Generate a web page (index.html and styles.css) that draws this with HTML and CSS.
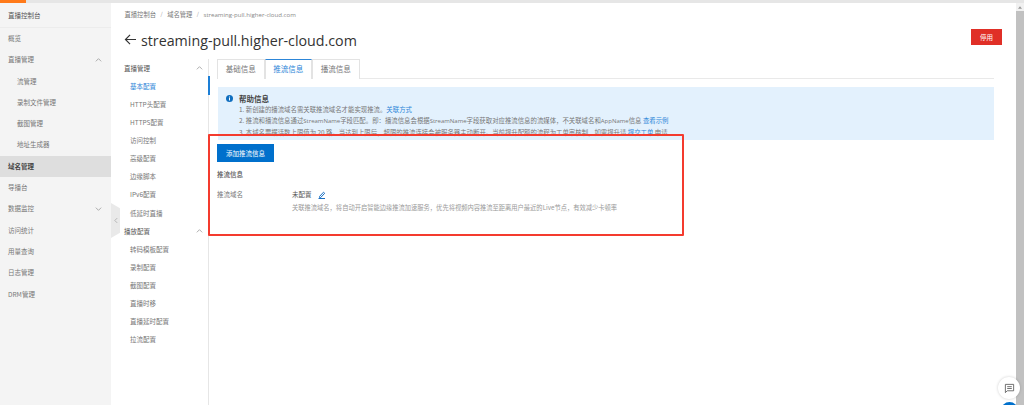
FILE: index.html
```html
<!DOCTYPE html>
<html lang="zh">
<head>
<meta charset="utf-8">
<title>域名管理</title>
<link rel="stylesheet" href="styles.css">
</head>
<body>
<div class="topbar"><div class="topbar-accent"></div></div>
<div class="app">
  <aside class="sidebar">
    <div class="side-head">直播控制台</div>
    <nav>
      <div class="side-item">概览</div>
      <div class="side-item has-arrow">直播管理<svg class="chev" viewBox="0 0 10 6"><path d="M1 5l4-4 4 4"/></svg></div>
      <div class="side-item sub">流管理</div>
      <div class="side-item sub">录制文件管理</div>
      <div class="side-item sub">截图管理</div>
      <div class="side-item sub">地址生成器</div>
      <div class="side-item active">域名管理</div>
      <div class="side-item">导播台</div>
      <div class="side-item has-arrow">数据监控<svg class="chev" viewBox="0 0 10 6"><path d="M1 1l4 4 4-4"/></svg></div>
      <div class="side-item">访问统计</div>
      <div class="side-item">用量查询</div>
      <div class="side-item">日志管理</div>
      <div class="side-item">DRM管理</div>
    </nav>
    <div class="collapse"><svg viewBox="0 0 5 8"><path d="M4 1L1 4l3 3"/></svg></div>
  </aside>
  <div class="content">
    <div class="breadcrumb">
      <span>直播控制台</span><i>/</i><span>域名管理</span><i>/</i><span>streaming-pull.higher-cloud.com</span>
    </div>
    <div class="title-row">
      <svg class="back" viewBox="0 0 14 12"><path d="M13 6H1.500M6.500 1L1.500 6l5 5"/></svg>
      <h1>streaming-pull.higher-cloud.com</h1>
      <button class="danger">停用</button>
    </div>
    <div class="columns">
      <div class="subnav">
        <div class="sub-group">直播管理<svg class="chev" viewBox="0 0 10 6"><path d="M1 5l4-4 4 4"/></svg></div>
        <div class="sub-item current">基本配置</div>
        <div class="sub-item">HTTP头配置</div>
        <div class="sub-item">HTTPS配置</div>
        <div class="sub-item">访问控制</div>
        <div class="sub-item">高级配置</div>
        <div class="sub-item">边缘脚本</div>
        <div class="sub-item">IPv6配置</div>
        <div class="sub-item">低延时直播</div>
        <div class="sub-group">播放配置<svg class="chev" viewBox="0 0 10 6"><path d="M1 5l4-4 4 4"/></svg></div>
        <div class="sub-item">转码模板配置</div>
        <div class="sub-item">录制配置</div>
        <div class="sub-item">截图配置</div>
        <div class="sub-item">直播时移</div>
        <div class="sub-item">直播延时配置</div>
        <div class="sub-item">拉流配置</div>
        <div class="sub-marker"></div>
      </div>
      <main class="panel">
        <div class="tabs">
          <div class="tab">基础信息</div>
          <div class="tab on">推流信息</div>
          <div class="tab">播流信息</div>
        </div>
        <section class="help">
          <svg class="info" viewBox="0 0 10 10"><circle cx="5" cy="5" r="5"/><rect x="4.300" y="4.200" width="1.400" height="3.600"/><rect x="4.300" y="2.200" width="1.400" height="1.400"/></svg>
          <div class="help-text">
            <div class="help-title">帮助信息</div>
            <div>1. 新创建的播流域名需关联推流域名才能实现推流。<a>关联方式</a></div>
            <div>2. 推流和播流信息通过<span class="latin">StreamName</span>字段匹配。即：播流信息会根据<span class="latin">StreamName</span>字段获取对应推流信息的流媒体，不关联域名和<span class="latin">AppName</span>信息 <a>查看示例</a></div>
            <div>3. 本域名票据话数上限值为 20 路。当达到上限后，超限的推流连接会被服务器主动断开。当前提升配额的流程为工单审核制，如需提升请 <a>提交工单</a> 申请</div>
          </div>
        </section>
        <button class="primary">添加推流信息</button>
        <h2>推流信息</h2>
        <div class="field">
          <div class="field-label">推流域名</div>
          <div class="field-body">
            <div class="field-value">未配置<svg class="pencil" viewBox="0 0 8 8"><path d="M1.500 5.500L5.500 1.200l1.200 1.100L2.700 6.500H1.500z"/><path d="M.5 7.500h6.500"/></svg></div>
            <div class="field-desc">关联推流域名，将自动开启智能边缘推流加速服务，优先将视频内容推流至距离用户最近的Live节点，有效减少卡顿率</div>
          </div>
        </div>
      </main>
    </div>
  </div>
  <div class="scrollbar">
    <svg class="scroll-up" viewBox="0 0 6 4"><path d="M3 0l3 4H0z"/></svg>
    <div class="thumb"></div>
  </div>
</div>
<div class="mark"></div>
<div class="chat"><svg viewBox="0 0 12 12"><path d="M1.500 1.500h9v7h-7l-2 2z"/><path d="M3.500 4h5M3.500 6h5"/></svg></div>
<div class="fab"></div>
</body>
</html>
```
FILE: styles.css
```css
* { box-sizing: border-box; }
html, body { margin: 0; height: 405px; overflow: hidden; background: #fff; }
body { font-family: "Noto Sans CJK SC", "Noto Sans", sans-serif; font-size: 6.500px; color: #777; }
.topbar { height: 3px; background: #e6e6e6; }
.topbar-accent { width: 26px; height: 3px; background: #ff7a1a; }
.app { display: flex; height: 402px; }
.sidebar { position: relative; width: 111px; flex: none; background: #f4f4f4; }
.side-head { height: 25px; line-height: 25px; padding-left: 8px; color: #555; border-bottom: 1px solid #ececec; }
.side-item { position: relative; height: 21.300px; line-height: 21.300px; padding-left: 8px; }
.side-item.sub { padding-left: 17px; }
.side-item.active { background: #dedede; color: #444; font-weight: 700; }
.chev { position: absolute; right: 9px; top: 50%; width: 7px; height: 4px; margin-top: -2px; fill: none; stroke: #888; stroke-width: 1; }
.collapse { position: absolute; left: 111px; top: 200px; width: 9px; height: 35px; background: #e9e9e9; clip-path: polygon(0 0, 100% 15%, 100% 85%, 0 100%); display: flex; align-items: center; justify-content: center; }
.collapse svg { width: 4px; height: 7px; fill: none; stroke: #aaa; stroke-width: 1; }
.content { flex: 1; min-width: 0; padding-top: 8px; }
.breadcrumb { height: 7px; line-height: 7px; padding-left: 13.500px; font-size: 5.500px; display: flex; gap: 4.500px; }
.breadcrumb span:nth-child(-n+3) { font-size: 6.300px; }
.breadcrumb i { font-style: normal; color: #999; }
.breadcrumb span:last-child { font-family: "Open Sans", sans-serif; font-size: 6.100px; color: #888; }
.title-row { display: flex; align-items: center; height: 20px; margin-top: 9px; padding-left: 13px; padding-right: 14px; }
.back { width: 13px; height: 11px; margin-top: 5px; fill: none; stroke: #333; stroke-width: 1.300; flex: none; }
h1 { margin: 6px 0 0 4px; font: 400 14.250px "Open Sans", sans-serif; color: #333; flex: 1; }
.danger { width: 31px; height: 16px; border: 0; padding: 0; background: #e02f27; color: #fff; font: inherit; }
.columns { display: flex; margin-top: 9px; }
.subnav { position: relative; width: 98px; flex: none; height: 355px; margin-top: 3px; padding-left: 13px; border-right: 1px solid #e6e6e6; }
.sub-group { position: relative; height: 18.070px; line-height: 18.070px; color: #555; }
.sub-group .chev { right: 5px; }
.sub-item { height: 18.070px; line-height: 18.070px; padding-left: 6px; }
.sub-item.current { color: #2d86d8; }
.sub-marker { position: absolute; right: -2px; top: 17px; width: 2px; height: 18.500px; background: #1d7fd6; }
.panel { flex: 1; padding: 3px 22px 0 8px; }
.tabs { display: flex; height: 20px; border-bottom: 1px solid #e9e9e9; }
.tab { width: 47.500px; height: 20px; text-align: center; line-height: 18px; font-size: 7.500px; border: 1px solid #e3e3e3; border-bottom: 0; background: #fff; }
.tab.on { color: #2d86d8; border-top: 1px solid #2d86d8; }
.help { display: flex; height: 53px; margin-top: 8px; margin-left: 1px; padding: 6px 8px; background: #e3f1fd; overflow: hidden; font-size: 6.400px; }
.info { width: 7px; height: 7px; flex: none; margin-right: 6px; margin-top: 2px; fill: #0f6ebf; }
.info rect { fill: #fff; }
.help-text { line-height: 11px; color: #777; }
.help-title { color: #444; font-weight: 700; font-size: 7.500px; }
.latin { font-family: "Open Sans", sans-serif; font-size: 6px; }
.help a { color: #2d86d8; }
.primary { display: block; width: 57px; height: 18px; margin-top: 4px; border: 0; padding: 0; background: #0070cc; color: #fff; font: inherit; }
h2 { margin: 8px 0 0; font-size: 6.500px; line-height: 9px; font-weight: 500; color: #555; }
.field { display: flex; margin-top: 11px; }
.field-label { width: 75px; line-height: 9px; }
.field-value { display: flex; align-items: center; line-height: 9px; color: #555; }
.pencil { width: 8px; height: 8px; margin-left: 6px; fill: none; stroke: #1b6fc2; stroke-width: 1; }
.field-desc { margin-top: 4px; line-height: 9px; color: #999; font-size: 6.280px; }
.scrollbar { width: 8px; flex: none; background: #f1f1f1; display: flex; flex-direction: column; }
.scroll-up { width: 4px; height: 3px; margin: 3px auto 2px; fill: #999; }
.thumb { flex: 1; background: #c1c1c1; }
.mark { position: absolute; left: 208px; top: 134px; width: 476px; height: 102px; border: 2px solid #f43b2e; border-radius: 1px; }
.chat { position: absolute; left: 998px; top: 377px; width: 22px; height: 22px; border-radius: 50%; background: #fff; box-shadow: 0 0 3px rgba(0,0,0,.2); display: flex; align-items: center; justify-content: center; }
.chat svg { width: 11px; height: 11px; fill: none; stroke: #555; stroke-width: .9; }
.fab { position: absolute; left: 1001px; top: 402px; width: 17px; height: 17px; border-radius: 50%; background: #0070cc; }
```
